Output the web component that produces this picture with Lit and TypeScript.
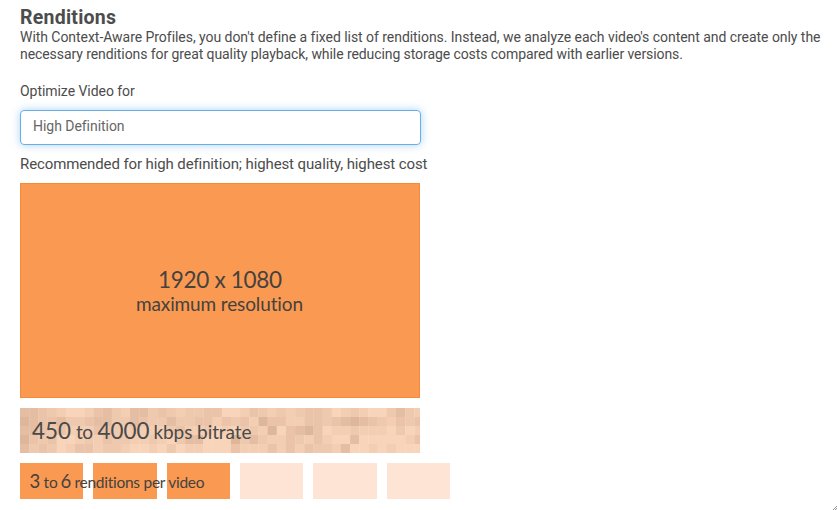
import { LitElement, html, svg, css } from "lit";
import { customElement } from "lit/decorators.js";

const SHADES = ["#f8d4ba", "#f4ceb3", "#efc9ae", "#eac3a9", "#e4bda2", "#deb79b"];

// One digit per mosaic tile, indexing SHADES.
const MOSAIC = [
  "44321001342144232122330013212123320121002421",
  "54334223442243224223313231533113323454321323",
  "44323111332121112311201022150345301121110201",
  "53230012132211210244000524211321310040000013",
  "42320133122100102011000311131313221400101000",
];

const TILE_W = 9.17;
const TILE_H = 9;

@customElement("bitrate-mosaic")
export class BitrateMosaic extends LitElement {
  static styles = css`
    :host { display: block; width: 400px; height: 45px; }
    svg { display: block; }
    text { font-family: Lato, sans-serif; fill: #4a4a48; font-variant-ligatures: none; }
  `;
  render() {
    return html`<svg width="400" height="45" viewBox="0 0 400 45">
      ${MOSAIC.map((row, y) =>
        [...row].map(
          (d, x) => svg`<rect x=${x * TILE_W} y=${y * TILE_H} width=${TILE_W + 0.3} height=${TILE_H} fill=${SHADES[+d]}></rect>`
        )
      )}
      <text x="12" y="31" font-size="22.5" textLength="39" lengthAdjust="spacingAndGlyphs">450</text>
      <text x="56" y="31" font-size="19" textLength="17">to</text>
      <text x="77.5" y="31" font-size="22.5" textLength="52" lengthAdjust="spacingAndGlyphs">4000</text>
      <text x="133.5" y="31" font-size="19" textLength="98">kbps bitrate</text>
    </svg>`;
  }
}

@customElement("app-root")
export class AppRoot extends LitElement {
  static styles = css`
    :host {
      display: flex;
      flex-direction: column;
      align-items: flex-start;
      position: relative;
      box-sizing: border-box;
      height: 510px;
      padding: 6px 0 0 20px;
      overflow: hidden;
      background: #fff;
      color: #4c4c4c;
      font: 14px/17px Roboto, sans-serif;
      white-space: nowrap;
    }
    h2 { margin: 0; font-size: 19.5px; line-height: 23px; font-weight: 700; letter-spacing: 0.25px; }
    .intro { letter-spacing: -0.08px; }
    .lead { letter-spacing: -0.045px; }
    .label { margin-top: 20px; letter-spacing: -0.05px; }
    .select {
      box-sizing: border-box;
      width: 401px;
      height: 35px;
      margin-top: 10px;
      padding: 0 12px;
      border: 1px solid #66afe9;
      border-radius: 4px;
      box-shadow: 0 0 8px rgba(102, 175, 233, 0.55);
      line-height: 31px;
      letter-spacing: -0.04px;
      color: #666;
    }
    .hint { margin-top: 11px; font-size: 15px; line-height: 17px; letter-spacing: -0.11px; }
    .frame {
      box-sizing: border-box;
      width: 400px;
      height: 215px;
      margin-top: 10px;
      border: 1px solid #f58a38;
      background: #fa9952;
    }
    .frame svg { display: block; }
    text { font-family: Lato, sans-serif; fill: #45423e; font-variant-ligatures: none; }
    bitrate-mosaic { margin-top: 10px; }
    .count { display: grid; width: 430px; height: 36px; margin-top: 10px; }
    .boxes, .count svg { grid-area: 1 / 1; }
    .boxes { display: flex; gap: 10px; }
    .box { flex: 1; background: #fde4d5; }
    .box.on { background: #fa9952; }
    .grip { position: absolute; right: 0; bottom: 0; }
  `;
  render() {
    return html`
      <h2>Renditions</h2>
      <div class="intro">
        <span class="lead">With Context-Aware Profiles, you don't define a fixed list of renditions. Instead, we analyze each video's content and create only the</span><br />
        <span>necessary renditions for great quality playback, while reducing storage costs compared with earlier versions.</span>
      </div>
      <div class="label">Optimize Video for</div>
      <div class="select">High Definition</div>
      <div class="hint">Recommended for high definition; highest quality, highest cost</div>
      <div class="frame">
        <svg width="398" height="213">
          <text x="137" y="104" font-size="22.5" textLength="124">1920 x 1080</text>
          <text x="115" y="127" font-size="19" textLength="167">maximum resolution</text>
        </svg>
      </div>
      <bitrate-mosaic></bitrate-mosaic>
      <div class="count">
        <div class="boxes">
          ${[1, 1, 1, 0, 0, 0].map((on) => html`<div class="box ${on ? "on" : ""}"></div>`)}
        </div>
        <svg width="430" height="36">
          <text x="9.5" y="25" font-size="18.5">3</text>
          <text x="23.5" y="25" font-size="15.5">to</text>
          <text x="40.5" y="25" font-size="18.5">6</text>
          <text x="54.5" y="25" font-size="15.5" textLength="130">renditions per video</text>
        </svg>
      </div>
      <svg class="grip" width="4" height="4"><path d="M0 4L4 0M2 4L4 2" stroke="#999" fill="none"></path></svg>
    `;
  }
}
